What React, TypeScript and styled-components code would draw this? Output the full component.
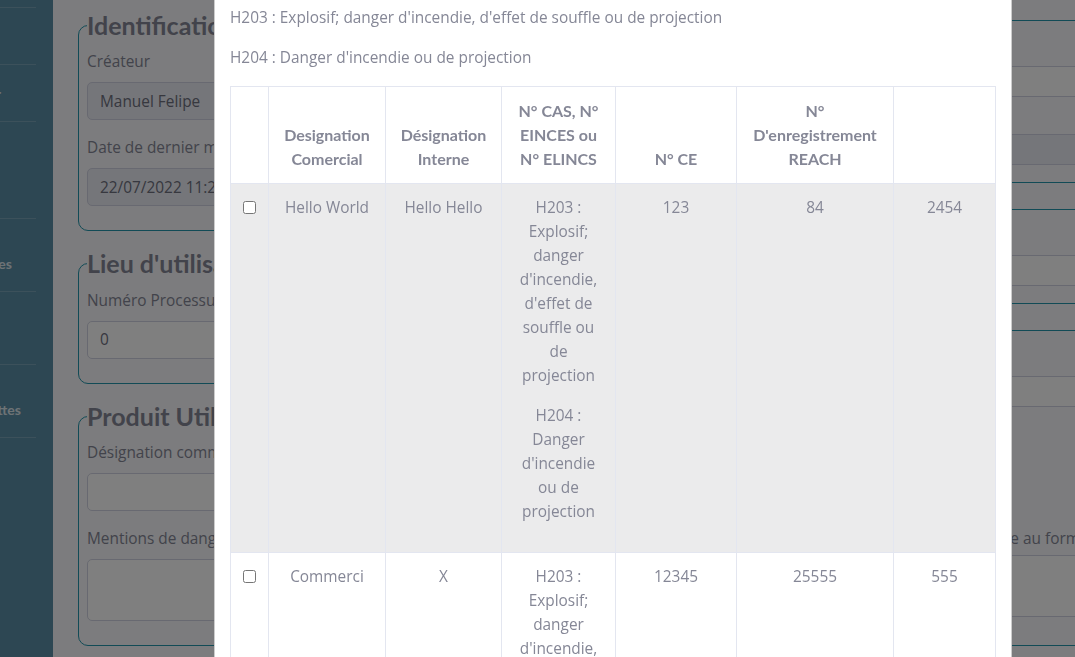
import React from 'react';
import styled, { createGlobalStyle } from 'styled-components';

const GlobalStyle = createGlobalStyle`
  * { box-sizing: border-box; }
  html, body { margin: 0; height: 100%; overflow: hidden; }
  body {
    font-family: 'Open Sans', 'Noto Sans', sans-serif;
    font-size: 15.4px;
    line-height: 24px;
    color: #858796;
    background: #f8f9fc;
  }
`;

const Page = styled.div`
  display: flex;
  height: 100vh;
`;

const Sidebar = styled.nav`
  flex: 0 0 53px;
  background: #5b8ea7;
  overflow: hidden;
`;

const SidebarInner = styled.ul`
  width: 224px;
  margin: 0 0 0 -188px;
  padding: 7px 0 0;
  list-style: none;
`;

const NavItem = styled.li<{ $h: number; $pr?: number }>`
  height: ${(p) => p.$h}px;
  display: flex;
  align-items: flex-end;
  justify-content: flex-end;
  padding: 0 ${(p) => p.$pr ?? 0}px 17px 0;
  border-top: 1px solid rgba(255, 255, 255, 0.18);
  font-family: Lato, sans-serif;
  font-weight: 700;
  font-size: 14px;
  line-height: 20px;
  color: rgba(255, 255, 255, 0.8);
  white-space: nowrap;
`;

const Main = styled.main`
  flex: 1;
  min-width: 0;
  padding: 10.5px 0 0 25px;
  overflow: hidden;
`;

const Columns = styled.div`
  display: grid;
  grid-template-columns: 584px 560px;
  column-gap: 25px;
  align-items: stretch;
`;

const Column = styled.div<{ $gap: number; $shift?: number }>`
  display: flex;
  flex-direction: column;
  gap: ${(p) => p.$gap}px;
  margin-top: ${(p) => -(p.$shift ?? 0)}px;
`;

const Fieldset = styled.fieldset<{ $grow?: boolean; $small?: boolean }>`
  margin: 0;
  min-width: 0;
  border: 1px solid #2496ac;
  border-radius: 10px;
  padding: ${(p) => (p.$small ? '3.5px 8px 8px' : '10.5px 8px 8px')};
  ${(p) => (p.$grow ? 'flex: 1;' : '')}
`;

const Legend = styled.legend`
  padding: 0;
  font-family: Lato, sans-serif;
  font-weight: 700;
  font-size: 25px;
  line-height: 29px;
  color: #858796;
  white-space: nowrap;
`;

const Group = styled.div<{ $small?: boolean }>`
  margin-bottom: ${(p) => (p.$small ? 9 : 16)}px;
`;

const Label = styled.label<{ $small?: boolean }>`
  display: block;
  margin-bottom: ${(p) => (p.$small ? 4 : 8)}px;
  white-space: nowrap;
`;

const Input = styled.input<{ $small?: boolean }>`
  display: block;
  width: 100%;
  height: ${(p) => (p.$small ? 31 : 38)}px;
  padding: ${(p) => (p.$small ? '4px 8px' : '6px 12px')};
  font: inherit;
  color: #6e707e;
  background: #fff;
  border: 1px solid #d1d3e2;
  border-radius: ${(p) => (p.$small ? 3 : 5)}px;
  &:disabled { background: #eaecf4; }
`;

const TextArea = styled.textarea`
  display: block;
  width: 100%;
  height: 62px;
  padding: 6px 12px;
  font: inherit;
  resize: none;
  color: #6e707e;
  background: #fff;
  border: 1px solid #d1d3e2;
  border-radius: 5px;
`;

const OptionList = styled.div`
  display: flex;
  flex-direction: column;
  height: 74px;
  font-size: 15px;
`;

const Backdrop = styled.div`
  position: fixed;
  inset: 0;
  background: rgba(0, 0, 0, 0.5);
`;

const Dialog = styled.div`
  position: fixed;
  top: -11px;
  left: 214px;
  width: 798px;
  background: #fff;
  border: 1px solid rgba(0, 0, 0, 0.2);
  border-radius: 5px;
`;

const ModalBody = styled.div`
  padding: 16px 15px;
`;

const Para = styled.p`
  margin: 0 0 16px;
`;

const Table = styled.table`
  width: 100%;
  margin-top: 4px;
  border-collapse: collapse;
  table-layout: fixed;
  color: #858796;
`;

const Th = styled.th`
  padding: 12px;
  border: 1px solid #e3e6f0;
  vertical-align: bottom;
  text-align: center;
  font-family: Lato, sans-serif;
  font-weight: 700;
  font-size: 16px;
  line-height: 24px;
`;

const Row = styled.tr<{ $striped?: boolean }>`
  background: ${(p) => (p.$striped ? '#ebebec' : '#fff')};
`;

const Td = styled.td<{ $left?: boolean }>`
  padding: 12px;
  border: 1px solid #e3e6f0;
  vertical-align: top;
  text-align: ${(p) => (p.$left ? 'left' : 'center')};
  line-height: 24px;
`;

const CellPara = styled.p`
  margin: 0 0 16px;
`;

const Check = styled.input`
  margin: 0;
  width: 13px;
  height: 13px;
  vertical-align: -1px;
`;

const columns = [38, 117, 116, 114, 121, 157, 102];

const hazards = [
  "H203 : Explosif; danger d'incendie, d'effet de souffle ou de projection",
  "H204 : Danger d'incendie ou de projection",
];

const products = [
  { comercial: 'Hello World', interne: 'Hello Hello', ce: '123', reach: '84', last: '2454' },
  { comercial: 'Commerci', interne: 'X', ce: '12345', reach: '25555', last: '555' },
];

export default function App() {
  return (
    <>
      <GlobalStyle />
      <Page>
        <Sidebar>
          <SidebarInner>
            <NavItem $h={57} />
            <NavItem $h={57} $pr={35}>Utilisateur</NavItem>
            <NavItem $h={97} />
            <NavItem $h={73} $pr={24}>Produits Chimiques</NavItem>
            <NavItem $h={73} />
            <NavItem $h={73} $pr={15}>Étiquettes</NavItem>
            <NavItem $h={73} />
          </SidebarInner>
        </Sidebar>
        <Main>
          <Columns>
            <Column $gap={18}>
              <Fieldset>
                <Legend>Identification</Legend>
                <Group>
                  <Label>Créateur</Label>
                  <Input disabled value="Manuel Felipe" readOnly />
                </Group>
                <Group>
                  <Label>Date de dernier modification</Label>
                  <Input disabled value="22/07/2022 11:24" readOnly />
                </Group>
              </Fieldset>
              <Fieldset>
                <Legend>Lieu d'utilisation</Legend>
                <Group>
                  <Label>Numéro Processus</Label>
                  <Input value="0" readOnly />
                </Group>
              </Fieldset>
              <Fieldset $grow>
                <Legend>Produit Utilisé</Legend>
                <Group>
                  <Label>Désignation commerciale</Label>
                  <Input value="" readOnly />
                </Group>
                <Group>
                  <Label>Mentions de danger</Label>
                  <TextArea readOnly value="" />
                </Group>
              </Fieldset>
            </Column>
            <Column $gap={11.5} $shift={5}>
              <Fieldset $small>
                <Legend>Évaluation</Legend>
                <Group $small>
                  <Label $small>Date d'évaluation</Label>
                  <Input $small value="" readOnly />
                </Group>
                <Group $small>
                  <Label $small>Évaluateur</Label>
                  <Input $small disabled value="" readOnly />
                </Group>
              </Fieldset>
              <Fieldset $small>
                <Legend>Poste de travail</Legend>
                <Group $small>
                  <Label $small>Nom du poste</Label>
                  <Input $small value="" readOnly />
                </Group>
              </Fieldset>
              <Fieldset $small $grow>
                <Legend>Conditionnement</Legend>
                <Group $small>
                  <Label $small>Quantité utilisée</Label>
                  <Input $small value="" readOnly />
                </Group>
                <Group $small>
                  <Label $small>Fréquence d'utilisation</Label>
                  <OptionList>
                    <span>Quotidienne</span>
                    <span>Hebdomadaire</span>
                    <span>Occasionnelle</span>
                  </OptionList>
                </Group>
                <Group $small>
                  <Label $small>Fiche de données de sécurité (FDS) conforme au format REACH</Label>
                  <TextArea readOnly value="" />
                </Group>
              </Fieldset>
            </Column>
          </Columns>
        </Main>
      </Page>
      <Backdrop />
      <Dialog>
        <ModalBody>
          {hazards.map((h) => (
            <Para key={h}>{h}</Para>
          ))}
          <Table>
            <colgroup>
              {columns.map((w, i) => (
                <col key={i} style={{ width: w }} />
              ))}
            </colgroup>
            <thead>
              <tr>
                <Th />
                <Th>Designation Comercial</Th>
                <Th>Désignation Interne</Th>
                <Th>N° CAS, N° EINCES ou N° ELINCS</Th>
                <Th>N° CE</Th>
                <Th>N° D'enregistrement REACH</Th>
                <Th />
              </tr>
            </thead>
            <tbody>
              {products.map((p, i) => (
                <Row key={p.comercial} $striped={i % 2 === 0}>
                  <Td $left>
                    <Check type="checkbox" />
                  </Td>
                  <Td>{p.comercial}</Td>
                  <Td>{p.interne}</Td>
                  <Td>
                    {hazards.map((h) => (
                      <CellPara key={h}>{h}</CellPara>
                    ))}
                  </Td>
                  <Td>{p.ce}</Td>
                  <Td>{p.reach}</Td>
                  <Td>{p.last}</Td>
                </Row>
              ))}
            </tbody>
          </Table>
        </ModalBody>
      </Dialog>
    </>
  );
}
